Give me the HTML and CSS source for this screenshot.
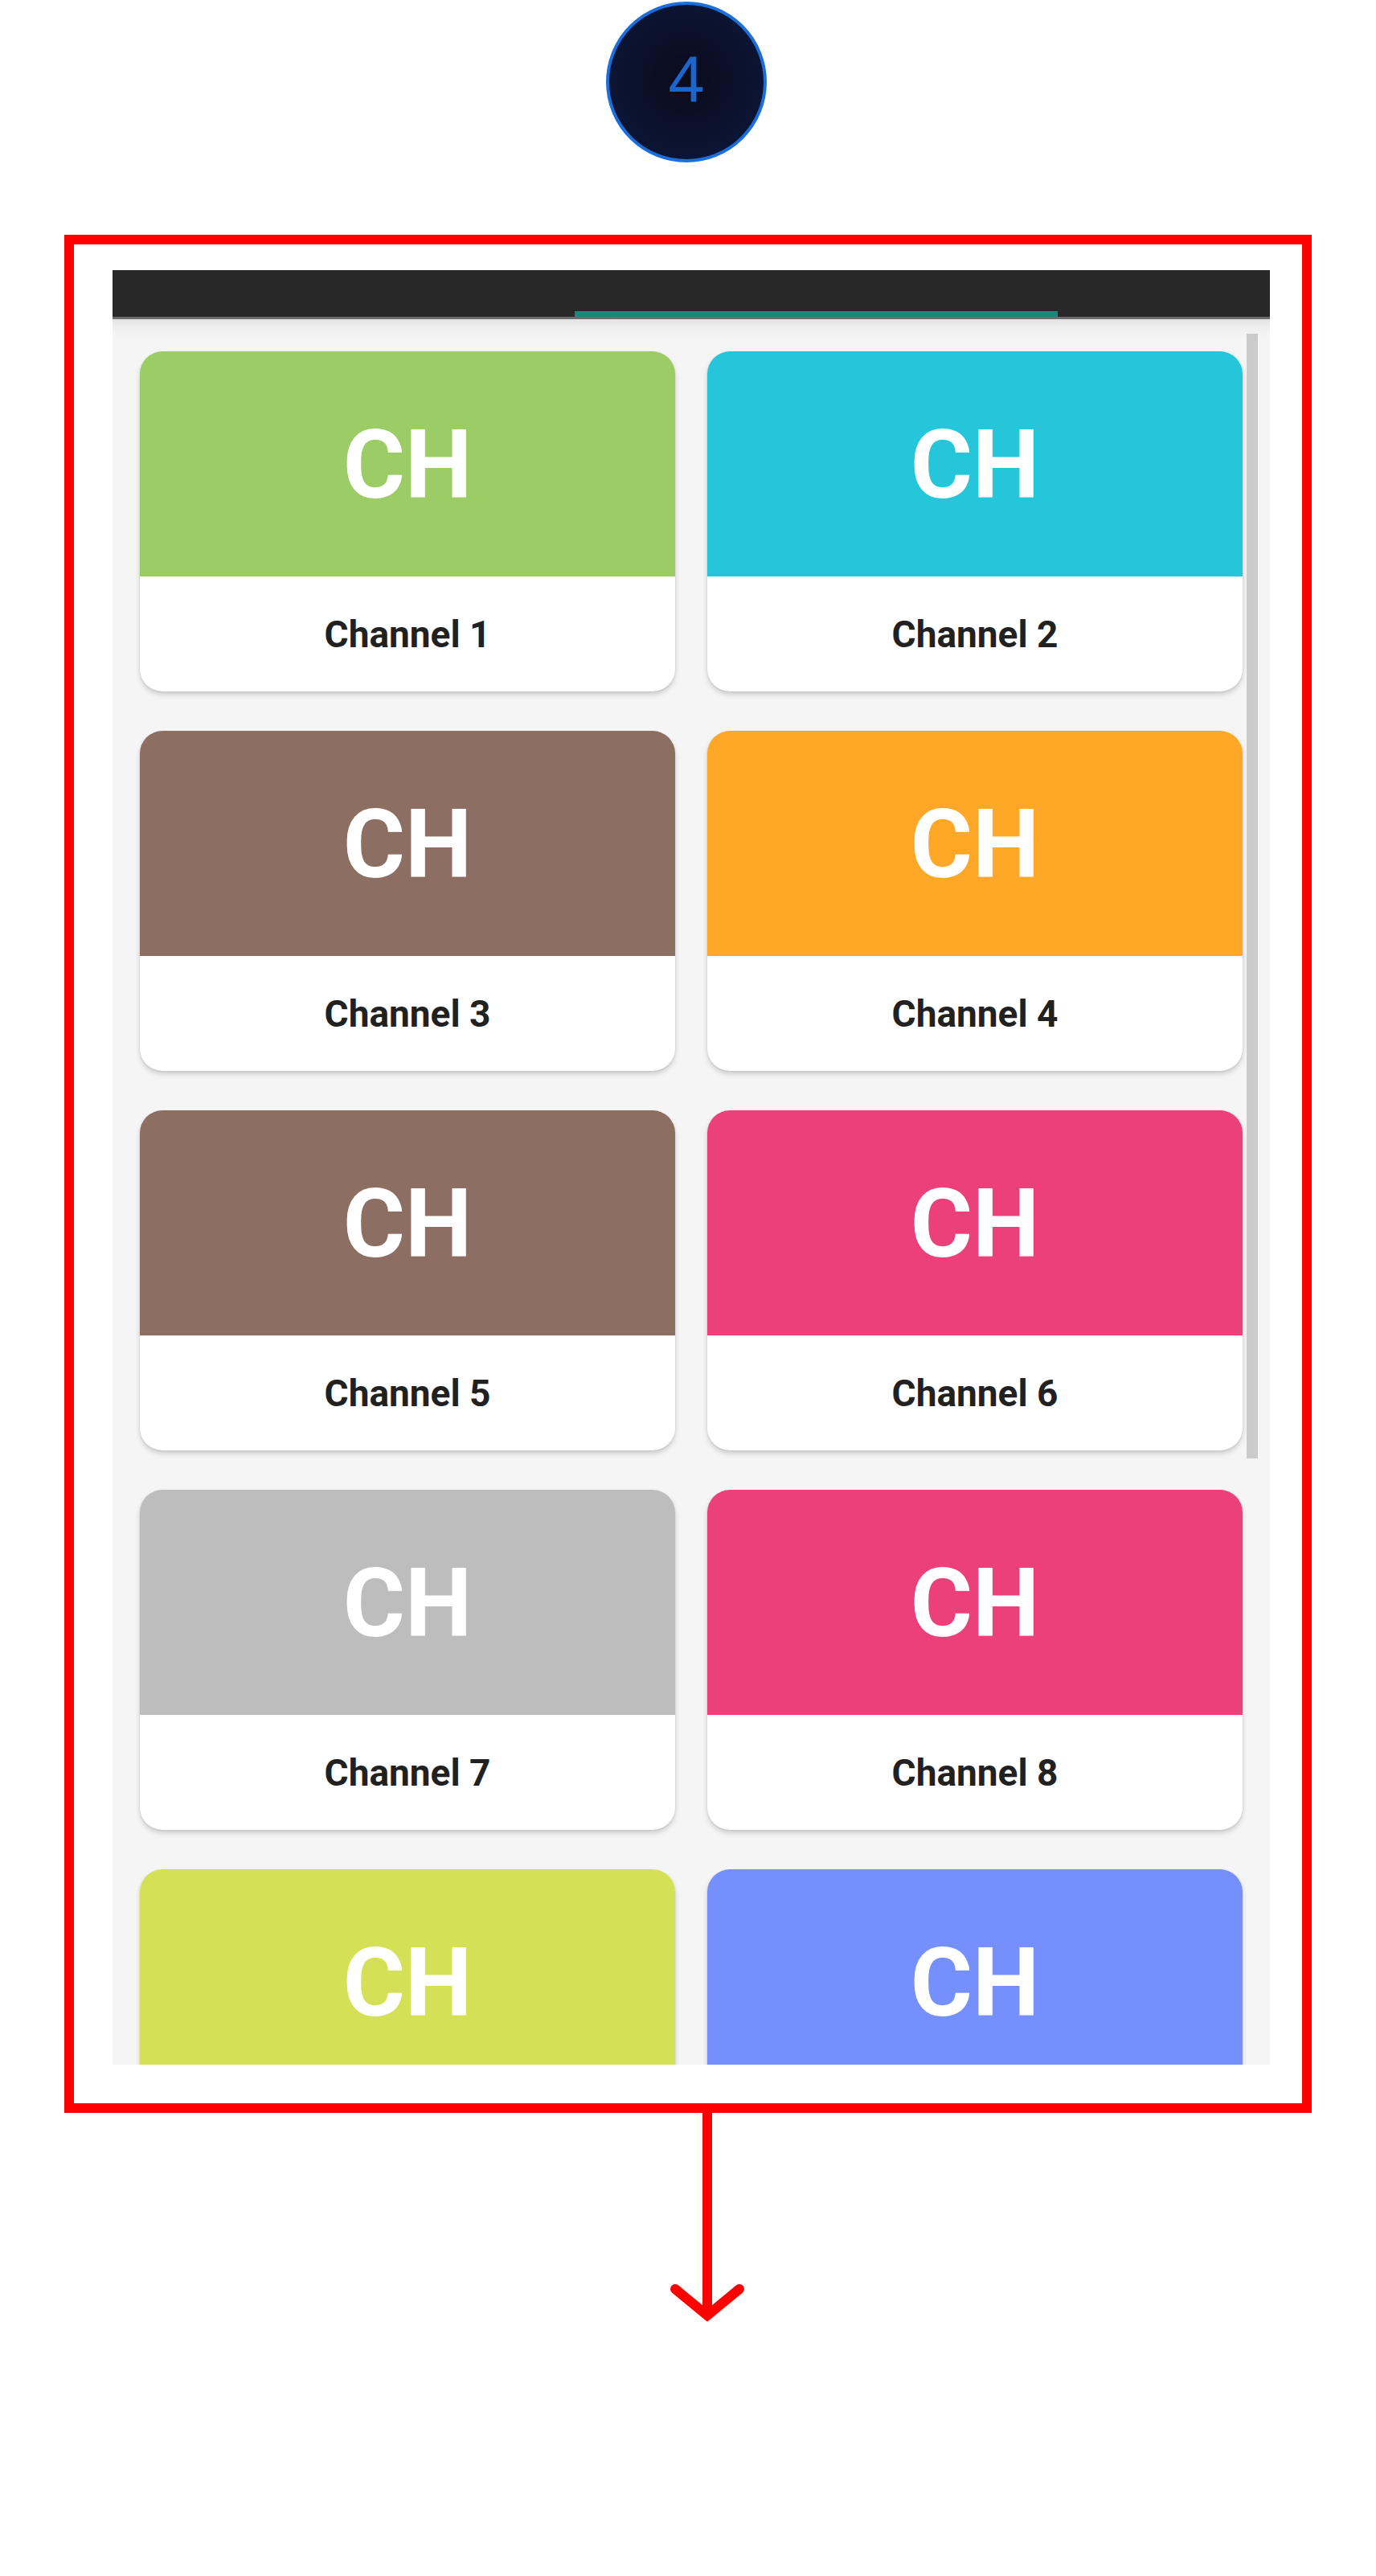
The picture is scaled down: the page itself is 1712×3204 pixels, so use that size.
FILE: index.html
```html
<!DOCTYPE html>
<html lang="en">
<head>
<meta charset="utf-8">
<title>Step 4 - Channels</title>
<link rel="stylesheet" href="styles.css">
</head>
<body>
<div class="page">
  <div class="badge-row">
    <div class="badge">4</div>
  </div>

  <div class="frame">
    <div class="phone">
      <div class="appbar">
        <div class="tab-spacer"></div>
        <div class="tab-indicator"></div>
      </div>
      <div class="content">
        <div class="grid">
          <div class="card"><div class="card-top c-green">CH</div><div class="card-label">Channel 1</div></div>
          <div class="card"><div class="card-top c-cyan">CH</div><div class="card-label">Channel 2</div></div>
          <div class="card"><div class="card-top c-brown">CH</div><div class="card-label">Channel 3</div></div>
          <div class="card"><div class="card-top c-orange">CH</div><div class="card-label">Channel 4</div></div>
          <div class="card"><div class="card-top c-brown">CH</div><div class="card-label">Channel 5</div></div>
          <div class="card"><div class="card-top c-pink">CH</div><div class="card-label">Channel 6</div></div>
          <div class="card"><div class="card-top c-gray">CH</div><div class="card-label">Channel 7</div></div>
          <div class="card"><div class="card-top c-pink">CH</div><div class="card-label">Channel 8</div></div>
          <div class="card"><div class="card-top c-lime">CH</div><div class="card-label">Channel 9</div></div>
          <div class="card"><div class="card-top c-indigo">CH</div><div class="card-label">Channel 10</div></div>
        </div>
      </div>
      <div class="scrollbar"></div>
    </div>
  </div>

  <div class="arrow-row">
    <svg class="arrow" width="100" height="262" viewBox="0 0 100 262">
      <line x1="50" y1="0" x2="50" y2="250" stroke="#ff0000" stroke-width="12"/>
      <polyline points="10,219 50,252 90,219" fill="none" stroke="#ff0000" stroke-width="12" stroke-linecap="round" stroke-linejoin="miter"/>
    </svg>
  </div>
</div>
</body>
</html>
```

FILE: styles.css
```css
* { box-sizing: border-box; }

html, body {
  margin: 0;
  padding: 0;
  background: #ffffff;
}

body {
  font-family: "Roboto", "Liberation Sans", Arial, sans-serif;
}

.page {
  width: 1712px;
  height: 3204px;
  display: flex;
  flex-direction: column;
  overflow: hidden;
}

.badge-row {
  display: flex;
  justify-content: center;
  padding-top: 2px;
  padding-right: 4px;
}

.badge {
  width: 200px;
  height: 200px;
  border-radius: 50%;
  border: 4px solid #1a6fdc;
  background: radial-gradient(circle at 50% 48%, #0b0b1c 0%, #0b1330 60%, #0b1a3c 100%);
  color: #1a66cc;
  font-family: "Liberation Sans", Arial, sans-serif;
  font-size: 81px;
  line-height: 1;
  display: flex;
  align-items: center;
  justify-content: center;
  padding-bottom: 6px;
}

.frame {
  margin-top: 90px;
  margin-left: 80px;
  width: 1552px;
  height: 2336px;
  border: 12px solid #ff0000;
  padding: 32px 40px 48px 48px;
}

.phone {
  position: relative;
  width: 1440px;
  height: 2232px;
  overflow: hidden;
  background: #f5f5f5;
}

.appbar {
  height: 61px;
  background: #282828;
  border-bottom: 3px solid #6c6c6c;
  display: flex;
  align-items: flex-end;
}

.tab-spacer {
  width: 575px;
}

.tab-indicator {
  width: 601px;
  height: 7px;
  background: #178a7b;
}

.content {
  background: linear-gradient(to bottom, #e2e2e2 0px, #efefef 10px, #f5f5f5 24px, #f5f5f5 100%);
}

.grid {
  display: grid;
  grid-template-columns: 666px 666px;
  column-gap: 40px;
  row-gap: 49px;
  padding: 40px 34px 0 34px;
}

.card {
  height: 423px;
  border-radius: 28px;
  overflow: hidden;
  background: #ffffff;
  box-shadow: 0 4px 6px rgba(0, 0, 0, 0.16), 0 1px 3px rgba(0, 0, 0, 0.08);
  display: flex;
  flex-direction: column;
}

.card-top {
  height: 280px;
  display: flex;
  align-items: center;
  justify-content: center;
  color: #ffffff;
  font-family: "Roboto", "Liberation Sans", Arial, sans-serif;
  font-weight: 700;
  font-size: 118px;
  line-height: 1;
  padding-top: 4px;
}

.card-label {
  flex: 1;
  display: flex;
  align-items: center;
  justify-content: center;
  color: #212121;
  font-family: "Roboto", "Liberation Sans", Arial, sans-serif;
  font-weight: 700;
  font-size: 46px;
  line-height: 1;
}

.c-green { background: #9ccc65; }
.c-cyan { background: #26c6da; }
.c-brown { background: #8d6e63; }
.c-orange { background: #ffa726; }
.c-pink { background: #ec407a; }
.c-gray { background: #bdbdbd; }
.c-lime { background: #d4e157; }
.c-indigo { background: #758ffc; }

.scrollbar {
  position: absolute;
  left: 1411px;
  top: 79px;
  width: 14px;
  height: 1399px;
  background: #cbcbcb;
}

.arrow-row {
  padding-left: 830px;
}

.arrow {
  display: block;
}
```
